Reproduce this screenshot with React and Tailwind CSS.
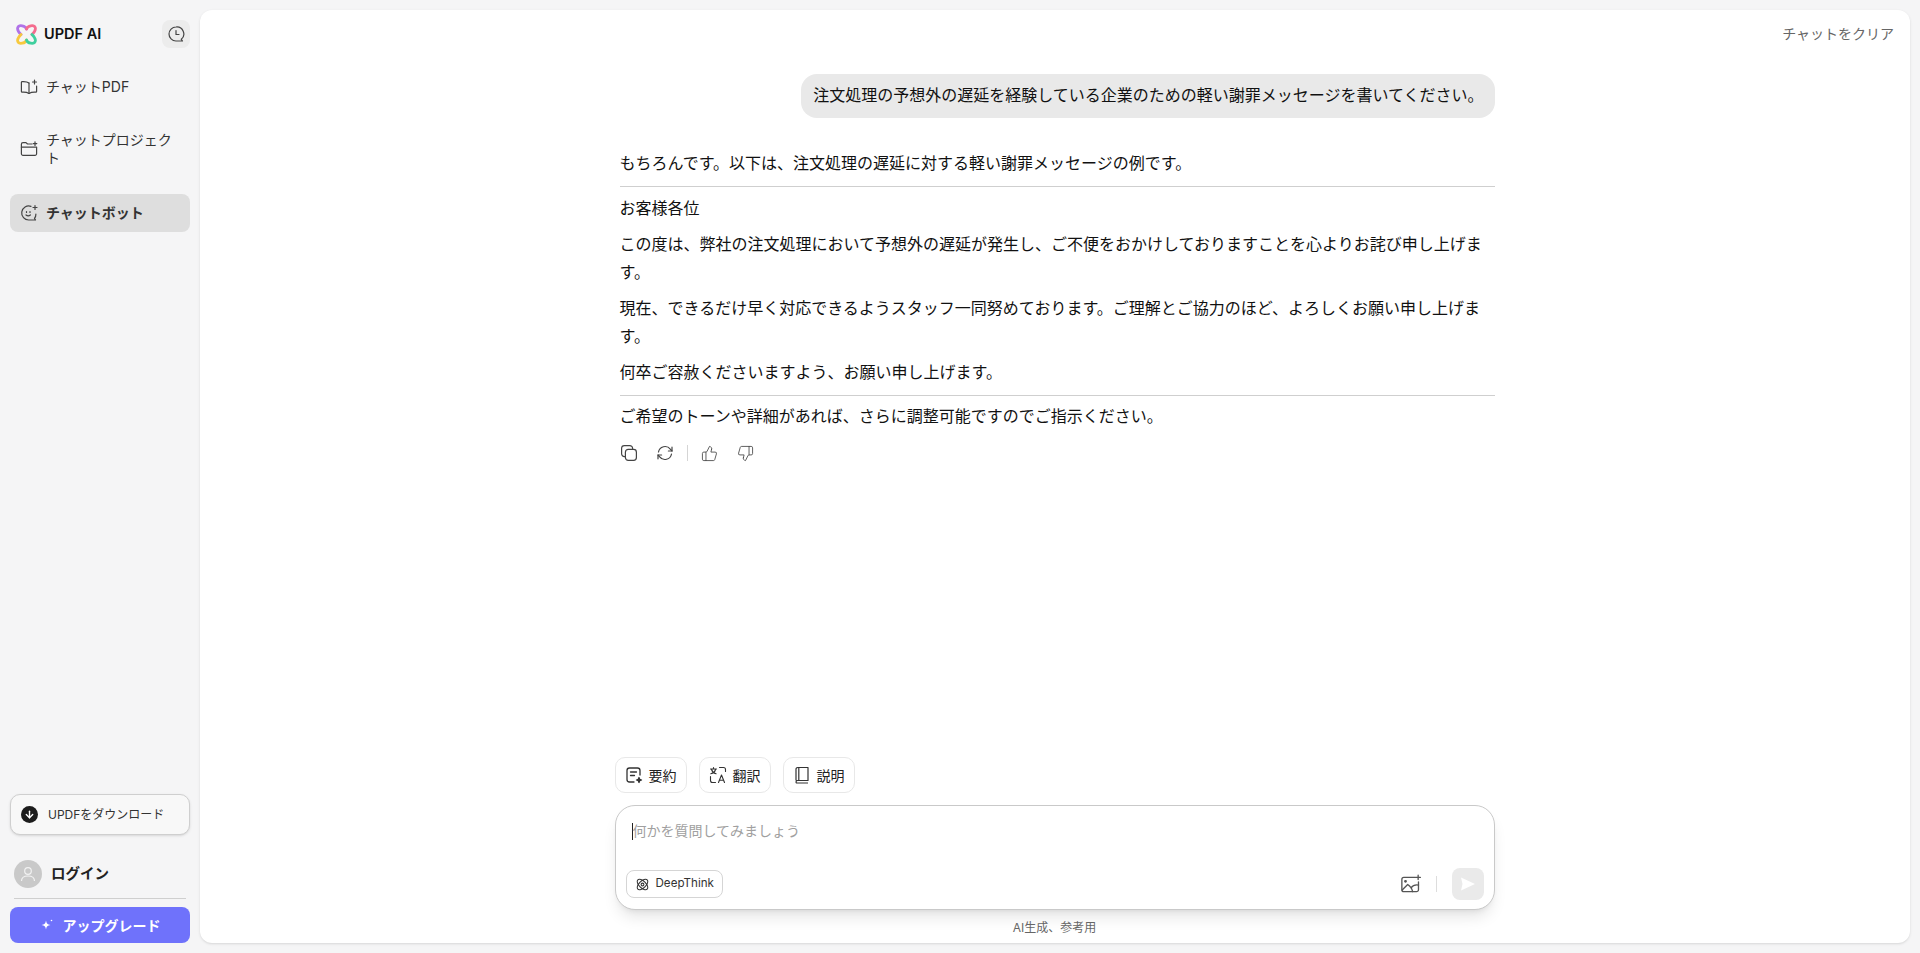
import React from "react";
import { ThumbsUp, ThumbsDown, ArrowDown } from "lucide-react";

const font = { fontFamily: '"Inter", "Noto Sans CJK JP", sans-serif' };

const Logo = () => (
  <svg width="21" height="21" viewBox="0 0 21 21" fill="none" strokeWidth="2.8" strokeLinecap="round">
    <path d="M10.5 5C9.5 1.5 3 0.5 1.8 3.5C1 5.5 2.5 8 5 10.5" stroke="#b072e8" />
    <path d="M10.5 5C11.5 1.5 18 0.5 19.2 3.5C20 5.5 18.5 8 16 10.5" stroke="#f46c8e" />
    <path d="M5 10.5C2.5 13 1 15.5 1.8 17.5C3 20.5 9.5 19.5 10.5 16" stroke="#f7c93e" />
    <path d="M16 10.5C18.5 13 20 15.5 19.2 17.5C18 20.5 11.5 19.5 10.5 16" stroke="#3fcf9e" />
  </svg>
);

const HistoryIcon = () => (
  <svg width="18" height="18" viewBox="0 0 18 18" fill="none" stroke="#444" strokeWidth="1.2" strokeLinecap="round" strokeLinejoin="round">
    <path d="M9 2a7 7 0 1 0 0 14h6.5l-1.2-1.7A7 7 0 0 0 9 2z" />
    <path d="M9 5.5V9.5h3" />
  </svg>
);

const BookSparkIcon = () => (
  <svg width="18" height="18" viewBox="0 0 18 18" fill="none" stroke="#444" strokeWidth="1.2" strokeLinecap="round" strokeLinejoin="round">
    <path d="M9 5C7.5 3.8 5 3.4 2 3.6a.7.7 0 0 0-.6.7v9.2c0 .4.3.7.7.7 2.6-.2 5 .1 6.9 1.3 1.9-1.2 4.3-1.5 6.9-1.3.4 0 .7-.3.7-.7V8" />
    <path d="M9 5v10.5" />
    <path d="M14.5 2v4M12.5 4h4" />
  </svg>
);

const FolderSparkIcon = () => (
  <svg width="18" height="18" viewBox="0 0 18 18" fill="none" stroke="#444" strokeWidth="1.2" strokeLinecap="round" strokeLinejoin="round">
    <path d="M12 4H7.5L6 2.6H3A1.6 1.6 0 0 0 1.4 4.2v9.6A1.6 1.6 0 0 0 3 15.4h12a1.6 1.6 0 0 0 1.6-1.6V7.5" />
    <path d="M1.4 7.2h15.2" />
    <path d="M15 1.8v3.6M13.2 3.6h3.6" />
  </svg>
);

const BotIcon = () => (
  <svg width="18" height="18" viewBox="0 0 18 18" fill="none" stroke="#444" strokeWidth="1.2" strokeLinecap="round" strokeLinejoin="round">
    <path d="M11 2.4A7 7 0 1 0 9 16h6.5l-1-1.6a7 7 0 0 0 1.4-4.4" />
    <path d="M6.5 7.5v1M10 7.5v1M6 11c1.2 1 3.2 1 4.4 0" />
    <path d="M15 1.5v4M13 3.5h4" />
  </svg>
);

const SummaryIcon = () => (
  <svg width="18" height="18" viewBox="0 0 18 18" fill="none" stroke="#333" strokeWidth="1.3" strokeLinecap="round" strokeLinejoin="round">
    <path d="M9 16H4.5A2.5 2.5 0 0 1 2 13.5v-9A2.5 2.5 0 0 1 4.5 2h8A2.5 2.5 0 0 1 15 4.5V9" />
    <path d="M5.5 6h6M5.5 9.5h4" />
    <path d="M14 11.5l.7 1.8 1.8.7-1.8.7-.7 1.8-.7-1.8-1.8-.7 1.8-.7z" fill="#333" />
  </svg>
);

const TranslateIcon = () => (
  <svg width="18" height="18" viewBox="0 0 18 18" fill="none" stroke="#333" strokeWidth="1.1" strokeLinecap="round" strokeLinejoin="round">
    <path d="M1.5 3h6M4.5 1.5V3M2.5 3.5c.5 2 2.5 3.7 4.6 4.3M6.5 3.5C6 5.5 4 7.2 1.8 7.8" />
    <path d="M10.5 1.5h4a2 2 0 0 1 2 2v2" />
    <path d="M1.5 10.5v4a2 2 0 0 0 2 2h3" />
    <path d="M9.5 16.5l3-7.5 3 7.5M10.5 14.2h4" />
  </svg>
);

const BookIcon = () => (
  <svg width="18" height="18" viewBox="0 0 18 18" fill="none" stroke="#333" strokeWidth="1.2" strokeLinejoin="round">
    <path d="M3 14.5V3.2A1.7 1.7 0 0 1 4.7 1.5h10.3v13H4.6A1.6 1.6 0 0 0 3 16.1a.9.9 0 0 0 .9.9h11.1" />
    <path d="M5.8 1.5v13" />
  </svg>
);

const AtomIcon = () => (
  <svg width="15" height="15" viewBox="0 0 14 14" fill="none" stroke="#333" strokeWidth="1">
    <ellipse cx="7" cy="7" rx="6.2" ry="3.2" transform="rotate(45 7 7)" />
    <ellipse cx="7" cy="7" rx="6.2" ry="3.2" transform="rotate(-45 7 7)" />
    <circle cx="7" cy="7" r="1.3" />
  </svg>
);

const ImageAddIcon = () => (
  <svg width="22" height="20" viewBox="0 0 20 18" fill="none" stroke="#555" strokeWidth="1.2" strokeLinecap="round" strokeLinejoin="round">
    <path d="M14 3H3.5A1.8 1.8 0 0 0 1.7 4.8v9.4A1.8 1.8 0 0 0 3.5 16h11.5a1.8 1.8 0 0 0 1.8-1.8V7" />
    <path d="M2 14.5l5-5c3 2 4 4 4.5 6.5M10 12.5c1.5-2 4-3 6.8-2.5" />
    <circle cx="5" cy="6.6" r=".7" fill="#555" />
    <path d="M16.5 1v4M14.5 3h4" />
  </svg>
);

const CopyIcon = () => (
  <svg width="18" height="18" viewBox="0 0 18 18" fill="none" stroke="#444" strokeWidth="1.2" strokeLinejoin="round">
    <rect x="5.4" y="5.4" width="11" height="11" rx="2.8" />
    <path d="M5.4 12.6H4.4a2.8 2.8 0 0 1-2.8-2.8V4.4a2.8 2.8 0 0 1 2.8-2.8h5.4a2.8 2.8 0 0 1 2.8 2.8v1" />
  </svg>
);

const RefreshIcon = () => (
  <svg width="18" height="18" viewBox="0 0 18 18" fill="none" stroke="#444" strokeWidth="1.2" strokeLinecap="round" strokeLinejoin="round">
    <path d="M2.5 8A6.6 6.6 0 0 1 14.3 5.2L16 7" />
    <path d="M16 3.2V7h-3.6" />
    <path d="M15.5 10A6.6 6.6 0 0 1 3.7 12.8L2 11" />
    <path d="M2 14.8V11h3.6" />
  </svg>
);

const SparkleIcon = () => (
  <svg width="14" height="14" viewBox="0 0 14 14" fill="#fff">
    <path d="M6 2.5c.5 3 1.5 4 4.5 4.5-3 .5-4 1.5-4.5 4.5C5.5 8.500 4.500 7.500 1.500 7c3-.5 4-1.500 4.500-4.500z" />
    <circle cx="11.5" cy="2.5" r=".8" />
  </svg>
);

const SideItem = ({ icon, active, className = "", children }) => (
  <div className={`flex items-center gap-[8px] rounded-lg px-[10px] py-[5px] min-h-[38px] text-[14px] leading-[18px] text-[#333] ${active ? "bg-[#dedede] font-semibold" : ""} ${className}`}>
    <span className="shrink-0 w-[18px] flex justify-center">{icon}</span>
    <span>{children}</span>
  </div>
);

const ChipButton = ({ icon, children }) => (
  <button className="flex items-center gap-[6px] h-[36px] px-[9px] rounded-[10px] border border-[#e8e8e8] bg-white text-[14px] text-[#222]">
    {icon}
    {children}
  </button>
);

export default function App() {
  return (
    <div className="flex h-screen overflow-hidden bg-[#f5f5f6]" style={font}>
      {/* Sidebar */}
      <aside className="w-[200px] shrink-0 flex flex-col pl-[10px] pr-[10px]">
        <div className="flex items-center justify-between h-[28px] mt-[20px] pl-[6px]">
          <div className="flex items-center gap-[7px]">
            <Logo />
            <span className="text-[14.5px] font-semibold text-[#111]">UPDF AI</span>
          </div>
          <div className="w-[28px] h-[28px] rounded-lg bg-[#ececec] flex items-center justify-center">
            <HistoryIcon />
          </div>
        </div>
        <div className="flex flex-col gap-[20px] mt-[20px]">
          <SideItem icon={<BookSparkIcon />}>チャットPDF</SideItem>
          <SideItem icon={<FolderSparkIcon />}>チャットプロジェクト</SideItem>
          <SideItem icon={<BotIcon />} active className="mt-[2px]">チャットボット</SideItem>
        </div>
        <div className="mt-auto">
          <div className="flex items-center gap-[10px] h-[41px] rounded-[10px] border border-[#cfcfcf] bg-[#f8f8f8] px-[10px] text-[12px] text-[#333] shadow-sm">
            <span className="w-[17px] h-[17px] rounded-full bg-[#1c1c1c] flex items-center justify-center">
              <ArrowDown size={11} color="#fff" strokeWidth={3} />
            </span>
            UPDFをダウンロード
          </div>
          <div className="flex items-center gap-[9px] mt-[25px] pl-[4px] mb-[10px]">
            <div className="w-[28px] h-[28px] rounded-full bg-[#c9c9c9] flex items-center justify-center">
              <svg width="18" height="18" viewBox="0 0 18 18" fill="none" stroke="#f2f2f2" strokeWidth="1.2">
                <circle cx="9" cy="6" r="3.3" />
                <path d="M2.5 16c0-3.5 2.5-5 6.5-5s6.5 1.5 6.5 5" />
              </svg>
            </div>
            <span className="text-[14.5px] font-semibold text-[#222]">ログイン</span>
          </div>
          <div className="h-px bg-[#cfcfcf] mx-[4px]" />
          <div className="flex items-center justify-center gap-[9px] h-[36px] mt-[8px] mb-[10px] rounded-lg bg-[#6f72fb] text-white text-[14px] font-semibold">
            <SparkleIcon />
            アップグレード
          </div>
        </div>
      </aside>

      {/* Main card */}
      <main className="flex-1 flex flex-col mt-[10px] mb-[10px] mr-[10px] rounded-xl bg-white shadow-sm">
        <div className="flex justify-end pr-[16px] pt-[15px] text-[14px] leading-[18px] text-[#666]">チャットをクリア</div>
        <div className="w-[880px] self-center ml-[-1px] flex-1 flex flex-col">
          <div className="flex justify-end mt-[31px]">
            <div className="h-[44px] flex items-center pl-[12px] pr-[11px] pb-[2px] rounded-2xl bg-[#e9e9e9] text-[16px] text-[#111]">
              注文処理の予想外の遅延を経験している企業のための軽い謝罪メッセージを書いてください。
            </div>
          </div>
          <div className="pl-[5px] mt-[31px] text-[16px] leading-[28px] text-[#111]">
            <p>もちろんです。以下は、注文処理の遅延に対する軽い謝罪メッセージの例です。</p>
            <hr className="border-[#cfcfcf] mt-[9px] mb-[7px]" />
            <p>お客様各位</p>
            <p className="mt-[8px]">この度は、弊社の注文処理において予想外の遅延が発生し、ご不便をおかけしておりますことを心よりお詫び申し上げます。</p>
            <p className="mt-[8px]">現在、できるだけ早く対応できるようスタッフ一同努めております。ご理解とご協力のほど、よろしくお願い申し上げます。</p>
            <p className="mt-[8px]">何卒ご容赦くださいますよう、お願い申し上げます。</p>
            <hr className="border-[#cfcfcf] mt-[9px] mb-[6px]" />
            <p>ご希望のトーンや詳細があれば、さらに調整可能ですのでご指示ください。</p>
          </div>
          <div className="flex items-center pl-[5px] mt-[14px] text-[#444]">
            <CopyIcon />
            <span className="ml-[18px]"><RefreshIcon /></span>
            <span className="w-px h-[16px] bg-[#d5d5d5] ml-[13px]" />
            <ThumbsUp size={17} strokeWidth={1.2} className="ml-[13px]" />
            <ThumbsDown size={17} strokeWidth={1.2} className="ml-[19px]" />
          </div>

          <div className="mt-auto flex gap-[12px]">
            <ChipButton icon={<SummaryIcon />}>要約</ChipButton>
            <ChipButton icon={<TranslateIcon />}>翻訳</ChipButton>
            <ChipButton icon={<BookIcon />}>説明</ChipButton>
          </div>
          <div className="mt-[12px] h-[105px] rounded-[20px] border border-[#c9c9c9] bg-white shadow-lg px-[10px] flex flex-col">
            <div className="mt-[15px] pl-[6px] flex items-center text-[14px] leading-[20px] text-[#a0a0a0]">
              <span className="w-px h-[17px] bg-[#222]" />
              何かを質問してみましょう
            </div>
            <div className="mt-auto mb-[9px] flex items-center justify-between">
              <div className="flex items-center gap-[6px] h-[28px] px-[8px] rounded-lg border border-[#d5d5d5] text-[11.6px] text-[#333]">
                <AtomIcon />
                DeepThink
              </div>
              <div className="flex items-center">
                <ImageAddIcon />
                <span className="w-px h-[16px] bg-[#ddd] ml-[14px] mr-[15px]" />
                <div className="w-[32px] h-[32px] rounded-lg bg-[#eaeaea] flex items-center justify-center">
                  <svg width="16" height="16" viewBox="0 0 16 16" fill="#fff"><path d="M1 1.5L15 8 1 14.5l1.5-6.5z" /></svg>
                </div>
              </div>
            </div>
          </div>
          <div className="text-center text-[12px] leading-[17px] text-[#666] mt-[9px] mb-[7px]">AI生成、参考用</div>
        </div>
      </main>
    </div>
  );
}
